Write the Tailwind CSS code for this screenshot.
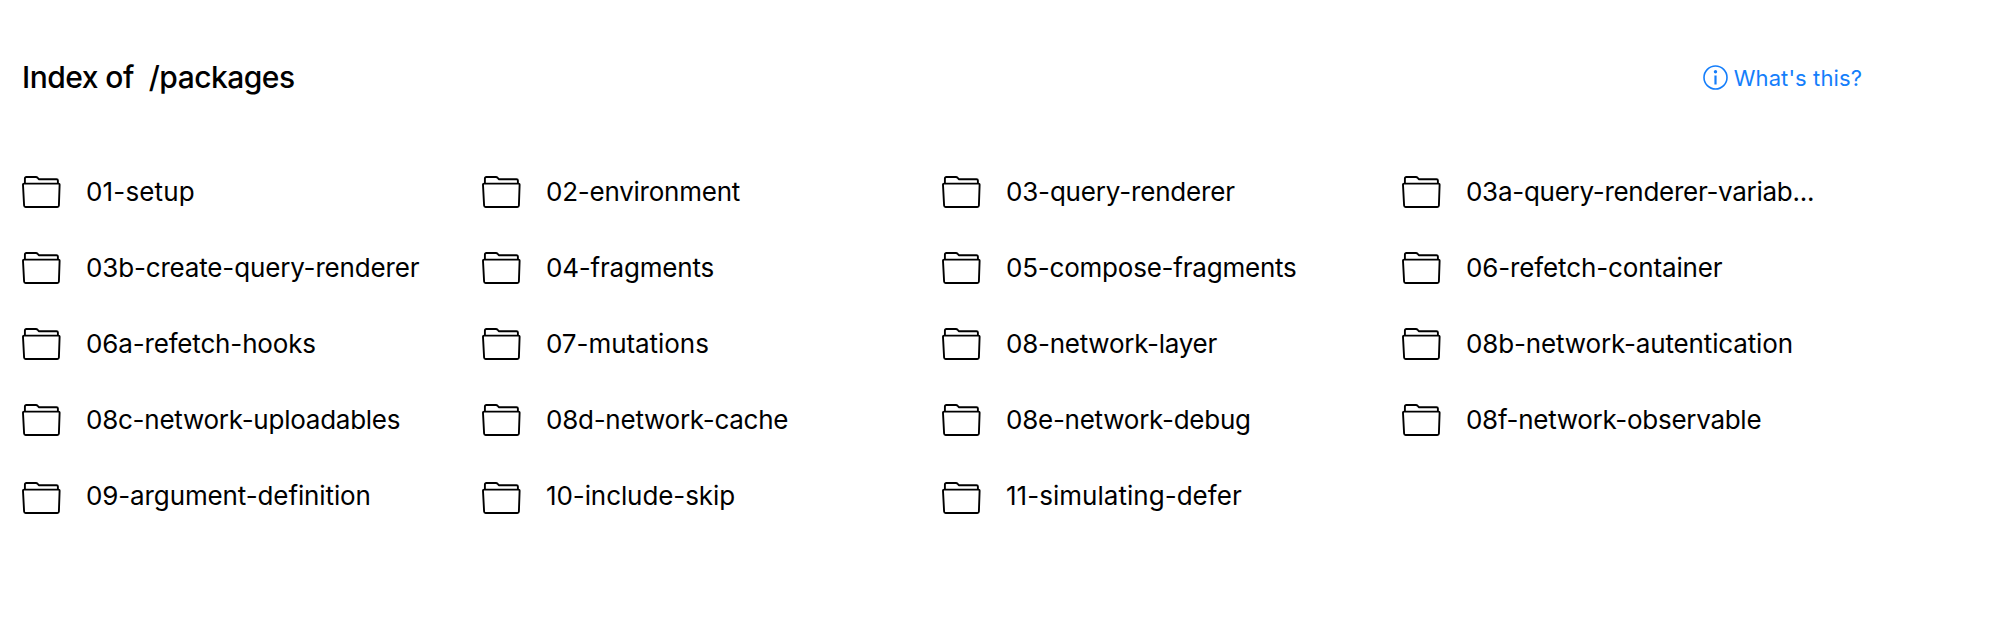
<!DOCTYPE html>
<html lang="en"><head><meta charset="utf-8"><title>Index of /packages</title>
<script src="https://cdn.jsdelivr.net/npm/@tailwindcss/browser@4"></script></head>
<body class="h-[628px] overflow-hidden bg-white font-['Inter',sans-serif] text-black">
<svg class="hidden"><symbol id="folder" viewBox="0 0 39 32"><g fill="none" stroke="currentColor" stroke-width="1.9" stroke-linejoin="round"><path d="M2.200 7.600H36.300Q37.700 7.600 37.600 9L36.900 29.500Q36.800 31 35.300 31H3.600Q2.200 31 2.100 29.500L1 9Q.9 7.600 2.200 7.600Z"/><path d="M2.900 7.500V2.500Q2.900 1 4.400 1H13.800Q15 1 15.800 2L16.800 3.200H34.500Q35.900 3.200 35.900 4.600V7.500"/></g></symbol></svg>
<header class="flex h-[155px] items-center justify-between pl-[22px] pr-[146px]">
<h1 class="text-[30px] font-medium tracking-[-0.52px] whitespace-pre">Index of  /packages</h1>
<a class="flex items-center gap-[6px] text-[22px] tracking-[0.1px] text-[#147efb]"><svg class="size-[25px]" viewBox="0 0 25 25" fill="none" stroke="currentColor" stroke-width="1.600"><circle cx="12.500" cy="12.500" r="11.500"/><path d="M12.500 10.500V19.500" stroke-width="2.2"/><circle cx="12.500" cy="6.800" r="1.700" fill="currentColor" stroke="none"/></svg><span class="pt-px leading-8">What's this?</span></a>
</header>
<main><ul id="files" class="grid grid-cols-[repeat(4,460px)] auto-rows-[76px] pl-[22px] -mt-[2px]"></ul></main>
<script>
const files=[["01-setup",.15],["02-environment",-.24],["03-query-renderer",-.18],["03a-query-renderer-variab...",-.28],["03b-create-query-renderer",-.16],["04-fragments",-.2],["05-compose-fragments",-.22],["06-refetch-container",-.13],["06a-refetch-hooks",-.16],["07-mutations",-.05],["08-network-layer",-.25],["08b-network-autentication",-.14],["08c-network-uploadables",-.25],["08d-network-cache",-.25],["08e-network-debug",-.25],["08f-network-observable",-.28],["09-argument-definition",-.12],["10-include-skip",-.09],["11-simulating-defer",.03]];
document.getElementById("files").innerHTML=files.map(([n,t],i)=>`<li class="flex items-center gap-[25px]"><svg class="${i<16?"mt-0.5":"mt-1.5"} h-8 w-[39px] shrink-0"><use href="#folder"/></svg><span class="text-[26px] whitespace-nowrap" style="letter-spacing:${t}px">${n}</span></li>`).join("");
</script></body></html>
